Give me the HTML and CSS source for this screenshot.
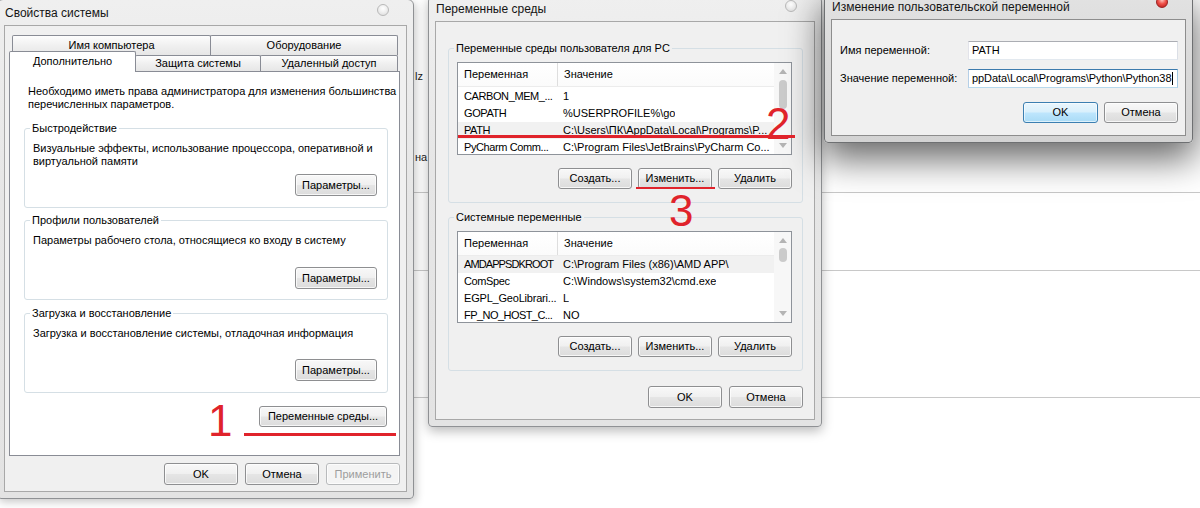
FILE: index.html
```html
<!DOCTYPE html>
<html lang="ru">
<head>
<meta charset="utf-8">
<title>Переменные среды</title>
<link rel="stylesheet" href="styles.css">
</head>
<body>
<div class="desktop">

  <div class="bg-app">
    <div class="bg-row bg-row-1">
      <span class="bg-text bg-t1">lz</span>
      <span class="bg-text bg-t2">на</span>
    </div>
    <div class="bg-row bg-row-2"></div>
    <div class="bg-row bg-row-3"></div>
  </div>

  <section class="window win-sys">
    <header class="titlebar">
      <span class="title">Свойства системы</span>
      <span class="close"></span>
    </header>
    <div class="client client-sys">
      <div class="tabs">
        <div class="tab-row row-back">
          <div class="tab tab-w1">Имя компьютера</div>
          <div class="tab tab-w2">Оборудование</div>
        </div>
        <div class="tab-row row-front">
          <div class="tab tab-active">Дополнительно</div>
          <div class="tab tab-w3">Защита системы</div>
          <div class="tab tab-w4">Удаленный доступ</div>
        </div>
      </div>
      <div class="tab-panel">
        <p class="note">Необходимо иметь права администратора для изменения большинства<br>перечисленных параметров.</p>

        <fieldset class="group group-sys group-perf">
          <legend>Быстродействие</legend>
          <p class="group-text">Визуальные эффекты, использование процессора, оперативной и<br>виртуальной памяти</p>
          <button class="btn btn-param">Параметры...</button>
        </fieldset>

        <fieldset class="group group-sys group-prof">
          <legend>Профили пользователей</legend>
          <p class="group-text">Параметры рабочего стола, относящиеся ко входу в систему</p>
          <button class="btn btn-param">Параметры...</button>
        </fieldset>

        <fieldset class="group group-sys group-boot">
          <legend>Загрузка и восстановление</legend>
          <p class="group-text">Загрузка и восстановление системы, отладочная информация</p>
          <button class="btn btn-param">Параметры...</button>
        </fieldset>

        <div class="env-row">
          <button class="btn btn-env">Переменные среды...</button>
        </div>
      </div>
      <div class="dlg-buttons dlg-buttons-sys">
        <button class="btn btn-dlg">OK</button>
        <button class="btn btn-dlg">Отмена</button>
        <button class="btn btn-dlg" disabled>Применить</button>
      </div>
    </div>
  </section>

  <section class="window win-env">
    <header class="titlebar">
      <span class="title">Переменные среды</span>
      <span class="close"></span>
    </header>
    <div class="client client-env">
      <fieldset class="group group-env">
        <legend>Переменные среды пользователя для PC</legend>
        <div class="listview lv-user">
          <div class="lv-main">
            <div class="lv-head">
              <span class="lv-col-name">Переменная</span>
              <span class="lv-col-val">Значение</span>
            </div>
            <div class="lv-body lv-body-user">
              <div class="lv-row"><span class="cell-name">CARBON_MEM_...</span><span class="cell-val">1</span></div>
              <div class="lv-row"><span class="cell-name">GOPATH</span><span class="cell-val">%USERPROFILE%\go</span></div>
              <div class="lv-row lv-row-sel"><span class="cell-name">PATH</span><span class="cell-val">C:\Users\ПК\AppData\Local\Programs\P...</span></div>
              <div class="lv-row"><span class="cell-name">PyCharm Comm...</span><span class="cell-val">C:\Program Files\JetBrains\PyCharm Co...</span></div>
            </div>
          </div>
          <div class="lv-scroll">
            <span class="sb-arrow sb-up"></span>
            <span class="sb-track"><span class="sb-thumb thumb-user"></span></span>
            <span class="sb-arrow sb-down"></span>
          </div>
        </div>
        <div class="group-buttons">
          <button class="btn btn-small">Создать...</button>
          <button class="btn btn-small">Изменить...</button>
          <button class="btn btn-small">Удалить</button>
        </div>
      </fieldset>

      <fieldset class="group group-env group-sysvars">
        <legend>Системные переменные</legend>
        <div class="listview lv-sys">
          <div class="lv-main">
            <div class="lv-head">
              <span class="lv-col-name">Переменная</span>
              <span class="lv-col-val">Значение</span>
            </div>
            <div class="lv-body">
              <div class="lv-row lv-row-sel"><span class="cell-name cell-caps">AMDAPPSDKROOT</span><span class="cell-val">C:\Program Files (x86)\AMD APP\</span></div>
              <div class="lv-row"><span class="cell-name">ComSpec</span><span class="cell-val">C:\Windows\system32\cmd.exe</span></div>
              <div class="lv-row"><span class="cell-name cell-loose">EGPL_GeoLibrari...</span><span class="cell-val">L</span></div>
              <div class="lv-row"><span class="cell-name cell-tight">FP_NO_HOST_C...</span><span class="cell-val">NO</span></div>
            </div>
          </div>
          <div class="lv-scroll">
            <span class="sb-arrow sb-up"></span>
            <span class="sb-track"><span class="sb-thumb thumb-sys"></span></span>
            <span class="sb-arrow sb-down"></span>
          </div>
        </div>
        <div class="group-buttons">
          <button class="btn btn-small">Создать...</button>
          <button class="btn btn-small">Изменить...</button>
          <button class="btn btn-small">Удалить</button>
        </div>
      </fieldset>

      <div class="dlg-buttons dlg-buttons-env">
        <button class="btn btn-dlg">OK</button>
        <button class="btn btn-dlg">Отмена</button>
      </div>
    </div>
  </section>

  <section class="window win-edit">
    <header class="titlebar">
      <span class="title">Изменение пользовательской переменной</span>
      <span class="close close-active"></span>
    </header>
    <div class="client client-edit">
      <div class="field-row">
        <label class="field-label">Имя переменной:</label>
        <div class="textbox">PATH</div>
      </div>
      <div class="field-row field-row-2">
        <label class="field-label">Значение переменной:</label>
        <div class="textbox textbox-focus"><span class="textbox-text">ppData\Local\Programs\Python\Python38</span><span class="caret"></span></div>
      </div>
      <div class="dlg-buttons dlg-buttons-edit">
        <button class="btn btn-dlg btn-default">OK</button>
        <button class="btn btn-dlg btn-cancel">Отмена</button>
      </div>
    </div>
  </section>

  <div class="anno anno-1">1</div>
  <div class="anno-line line-1"></div>
  <div class="anno anno-2">2</div>
  <div class="anno-line line-2"></div>
  <div class="anno anno-3">3</div>
  <div class="anno-line line-3"></div>
</div>
</body>
</html>
```

FILE: styles.css
```css
* { box-sizing: border-box; }

html, body {
  margin: 0;
  padding: 0;
}

body {
  width: 1200px;
  height: 508px;
  overflow: hidden;
  background: #ffffff;
  font-family: "Liberation Sans", Arial, sans-serif;
  font-size: 11px;
  line-height: 13px;
  color: #000;
}

p { margin: 0; }

.desktop {
  position: relative;
  width: 1200px;
  height: 508px;
  overflow: hidden;
}

/* ---------- background application ---------- */
.bg-app {
  position: absolute;
  left: 414px;
  top: 0;
  width: 786px;
  height: 508px;
  display: flex;
  flex-direction: column;
}
.bg-row { border-bottom: 1px solid #c8c8c8; flex: none; }
.bg-row-1 {
  height: 193px;
  display: flex;
  flex-direction: column;
  align-items: flex-start;
  padding: 70px 0 0 1px;
}
.bg-row-2 { height: 78px; }
.bg-row-3 { height: 127px; }
.bg-text { color: #222; }
.bg-t2 { margin-top: 68px; }

/* ---------- windows ---------- */
.window {
  position: absolute;
  display: flex;
  flex-direction: column;
  border: 1px solid #8f9194;
  border-radius: 6px 6px 4px 4px;
  padding: 0 6px 6px;
  background: linear-gradient(#efefef, #e6e6e6 40%, #e3e3e3);
}
.titlebar {
  flex: none;
  height: 25px;
  display: flex;
  align-items: center;
}
.title {
  flex: 1;
  font-size: 12px;
  padding: 2px 0 0 1px;
  color: #151515;
  white-space: nowrap;
}
.close {
  flex: none;
  align-self: flex-start;
  width: 12px;
  height: 12px;
  margin: 4px 18px 0 0;
  border-radius: 50%;
  border: 1px solid #b9b9b9;
  background: radial-gradient(circle at 50% 35%, #ffffff 0, #f0f0f0 45%, #d9d9d9 100%);
}
.close-active {
  border-color: #9b2020;
  background: radial-gradient(circle at 50% 30%, #ffc7c0 0, #f0524a 45%, #b51515 100%);
  margin-top: 2px;
}
.client {
  flex: 1;
  border: 1px solid #a8a8a8;
  background: #f0f0f0;
  display: flex;
  flex-direction: column;
}

/* ---------- System properties ---------- */
.win-sys {
  left: -3px;
  top: -1px;
  width: 417px;
  height: 500px;
  box-shadow: 2px 3px 8px rgba(0, 0, 0, 0.22);
}
.client-sys { padding: 9px 6px 6px 4px; }

.tabs {
  position: relative;
  z-index: 1;
  margin-bottom: -1px;
  flex: none;
}
.tab-row { display: flex; }
.row-back { padding-left: 3px; height: 20px; }
.row-front {
  margin-top: -4px;
  height: 21px;
  align-items: flex-end;
}
.tab {
  border: 1px solid #898c95;
  border-bottom: none;
  border-radius: 2px 2px 0 0;
  background: linear-gradient(#fdfdfd, #f0f0f0 50%, #e6e6e6);
  display: flex;
  align-items: center;
  justify-content: center;
  white-space: nowrap;
}
.row-back .tab { height: 20px; }
.tab-w1 { width: 199px; }
.tab-w2 { width: 188px; margin-left: -1px; }
.row-front .tab { height: 16px; margin-bottom: 1px; }
.row-front .tab.tab-active {
  position: relative;
  z-index: 2;
  width: 127px;
  height: 21px;
  margin-bottom: 0;
  background: #ffffff;
  padding-bottom: 1px;
}
.tab-w3 { width: 126px; margin-left: -1px; }
.tab-w4 { width: 138px; margin-left: -1px; }

.tab-panel {
  flex: none;
  width: 391px;
  height: 385px;
  border: 1px solid #898c95;
  background: #ffffff;
  padding: 13px 11px 0 14px;
  display: flex;
  flex-direction: column;
}
.note {
  margin: 0 0 11px 4px;
  white-space: nowrap;
}

.group {
  margin: 0;
  min-width: 0;
  border: 1px solid #d5dfe5;
  border-radius: 3px;
  display: flex;
  flex-direction: column;
}
.group legend {
  padding: 0 2px;
  margin-left: -3px;
  line-height: 13px;
}
.group-text { white-space: nowrap; }
.group-sys { padding: 7px 10px 11px 8px; }
.group-sys .btn { align-self: flex-end; }
.group-perf .btn { margin-top: 6px; }
.group-prof { margin-top: 6px; padding-bottom: 10px; }
.group-prof .btn { margin-top: 20px; }
.group-boot { margin-top: 7px; }
.group-boot .btn { margin-top: 19px; }

.env-row {
  margin-top: 13px;
  display: flex;
  justify-content: flex-end;
  padding-right: 1px;
}

.dlg-buttons {
  display: flex;
  justify-content: flex-end;
  gap: 7px;
}
.dlg-buttons-sys { margin-top: 7px; }

/* ---------- buttons ---------- */
.btn {
  font: inherit;
  color: #000;
  height: 22px;
  padding: 0;
  border: 1px solid #8e8f91;
  border-radius: 3px;
  background: linear-gradient(#f8f8f8 0%, #f0f0f0 48%, #e5e5e5 52%, #dcdcdc 100%);
  box-shadow: inset 0 0 0 1px rgba(255, 255, 255, 0.75);
  display: inline-flex;
  align-items: center;
  justify-content: center;
  white-space: nowrap;
  flex: none;
}
.btn:disabled {
  color: #9d9d9d;
  border-color: #b8babc;
  background: #f4f4f4;
}
.btn-param { width: 82px; }
.btn-env { width: 128px; height: 21px; }
.btn-dlg { width: 74px; }
.btn-small { width: 74px; height: 21px; }
.btn-default {
  border-color: #3c7fb1;
  background: linear-gradient(#eaf6fd 0%, #d9f0fc 48%, #bee6fd 52%, #a9dbf6 100%);
  box-shadow: inset 0 0 0 1px rgba(255, 255, 255, 0.6);
}

/* ---------- Environment variables ---------- */
.win-env {
  left: 428px;
  top: -5px;
  width: 394px;
  height: 432px;
  box-shadow: 0 4px 12px rgba(0, 0, 0, 0.28);
}
.client-env { padding: 20px 11px 0 12px; }

.group-env { padding: 7px 10px 13px 8px; }
.group-sysvars { margin-top: 8px; }

.listview {
  flex: none;
  height: 93px;
  border: 1px solid #8e939a;
  background: #ffffff;
  display: flex;
  overflow: hidden;
}
.lv-sys { height: 92px; }
.lv-main {
  flex: 1;
  min-width: 0;
  display: flex;
  flex-direction: column;
  overflow: hidden;
}
.lv-head {
  flex: none;
  height: 24px;
  display: flex;
  align-items: center;
  border-bottom: 1px solid #ececec;
  background: linear-gradient(#ffffff, #fbfbfb);
}
.lv-col-name {
  width: 100px;
  height: 100%;
  display: flex;
  align-items: center;
  padding-left: 6px;
  border-right: 1px solid #dedede;
}
.lv-col-val { padding-left: 6px; }
.lv-body-user { padding-top: 1px; }
.lv-row {
  height: 17px;
  display: flex;
  align-items: center;
  white-space: nowrap;
}
.lv-row-sel { background: #f1f1f1; }
.cell-name {
  width: 100px;
  flex: none;
  padding-left: 6px;
  letter-spacing: -0.4px;
}
.cell-caps { letter-spacing: -0.9px; }
.cell-loose { letter-spacing: -0.2px; }
.cell-tight { letter-spacing: -0.55px; }
.cell-val {
  padding-left: 5px;
  overflow: hidden;
}

.lv-scroll {
  flex: none;
  width: 17px;
  display: flex;
  flex-direction: column;
  background: #f7f7f7;
}
.sb-arrow {
  flex: none;
  height: 17px;
  display: flex;
  align-items: center;
  justify-content: center;
}
.sb-up::before,
.sb-down::before {
  content: "";
  width: 0;
  height: 0;
  border-left: 4px solid transparent;
  border-right: 4px solid transparent;
}
.sb-up::before { border-bottom: 5px solid #b4b4b4; }
.sb-down::before { border-top: 5px solid #b4b4b4; }
.sb-track {
  flex: 1;
  display: flex;
  justify-content: center;
  align-items: flex-start;
}
.sb-thumb {
  width: 8px;
  border-radius: 4px;
  background: #cbcbcb;
}
.thumb-user { height: 29px; }
.thumb-sys { height: 14px; margin-top: -1px; }

.group-buttons {
  margin-top: 13px;
  display: flex;
  justify-content: flex-end;
  gap: 6px;
}
.dlg-buttons-env { margin-top: 15px; }

/* ---------- Edit variable ---------- */
.win-edit {
  left: 824px;
  top: -7px;
  width: 369px;
  height: 150px;
  border-color: #6e7072;
  background: linear-gradient(#e2e2e2, #d9d9d9 50%, #d3d3d3);
  box-shadow: 0 14px 36px 2px rgba(0, 0, 0, 0.6);
  z-index: 2;
}
.client-edit { padding: 21px 7px 0 8px; border-color: #8d8d8d; }
.field-row {
  display: flex;
  align-items: center;
  height: 19px;
}
.field-row-2 { margin-top: 9px; }
.field-label { flex: 1; white-space: nowrap; }
.textbox {
  flex: none;
  width: 210px;
  height: 19px;
  border: 1px solid #abadb3;
  border-color: #abadb3 #dbdfe6 #e3e9ef #e2e3ea;
  background: #ffffff;
  padding-left: 3px;
  display: flex;
  align-items: center;
  overflow: hidden;
  white-space: nowrap;
}
.textbox-focus { border-color: #3d7bad #a4c9e3 #b7d9ed #b5cfe7; }
.textbox-text { letter-spacing: -0.08px; }
.caret {
  flex: none;
  width: 1px;
  height: 13px;
  margin-left: 1px;
  background: #000;
}
.dlg-buttons-edit {
  margin-top: 14px;
  gap: 6px;
}
.dlg-buttons-edit .btn { height: 21px; }
.dlg-buttons-edit .btn-default { width: 75px; }

/* ---------- red annotations ---------- */
.anno {
  position: absolute;
  z-index: 5;
  color: #e0232b;
  font-family: "Liberation Sans", Arial, sans-serif;
  font-size: 44px;
  line-height: 44px;
}
.anno-1 { left: 208px; top: 399px; }
.anno-2 { left: 766px; top: 102px; }
.anno-3 { left: 669px; top: 189px; }
.anno-line {
  position: absolute;
  z-index: 5;
  height: 3px;
  background: #e0232b;
}
.line-1 { left: 244px; top: 433px; width: 152px; }
.line-2 { left: 458px; top: 135px; width: 337px; }
.line-3 { left: 636px; top: 187px; width: 79px; height: 2px; }
```
